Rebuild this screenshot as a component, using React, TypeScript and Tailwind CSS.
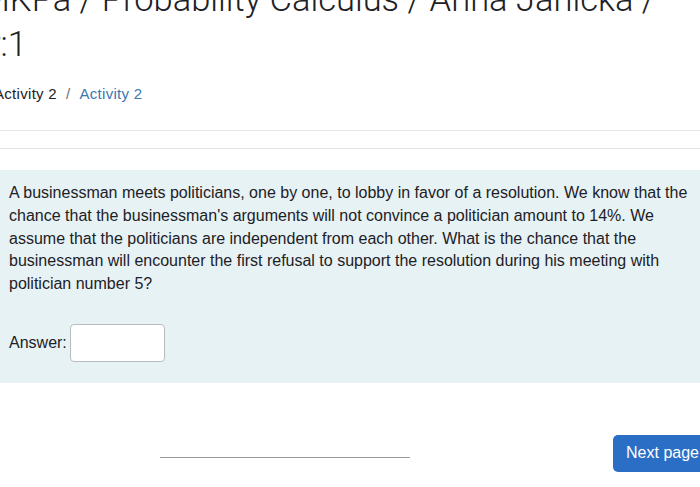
export default function App() {
  return (
    <div className="w-[700px] h-[487px] overflow-hidden bg-white text-[#1d2125] font-['Liberation_Sans',Arial,sans-serif]">
      {/* page title, cut at top */}
      <h1 className="-mt-[23px] -ml-[20px] whitespace-nowrap text-[34.5px] leading-[45px] font-light text-[#1d2125] font-['Roboto',sans-serif]">
        <div>MKPa / Probability Calculus / Anna Janicka /</div>
        <div className="ml-[9px]">r:1</div>
      </h1>

      {/* breadcrumb */}
      <nav className="mt-[17px] -ml-[6px] flex items-center gap-[9px] text-[15px] leading-[20px] tracking-[0.3px] whitespace-nowrap">
        <span className="text-[#1d2125]">Activity 2</span>
        <span className="text-[#6a737b]">/</span>
        <span className="text-[#3a78b0]">Activity 2</span>
      </nav>

      <div className="mt-[26px] border-t border-[#e6e6e6]" />
      <div className="mt-[17px] border-t border-[#e2e2e2]" />

      {/* question */}
      <div className="mt-[21px] bg-[#e7f2f5] pl-[9px] pr-2 pt-[12px] pb-[21px]">
        <p className="text-[16px] leading-[22.8px] text-[#1d2125]">
          A businessman meets politicians, one by one, to lobby in favor of a resolution. We know that the chance that the businessman's arguments will not convince a politician amount to 14%. We assume that the politicians are independent from each other. What is the chance that the businessman will encounter the first refusal to support the resolution during his meeting with politician number 5?
        </p>
        <div className="mt-[28px] flex items-center gap-[3px]">
          <span className="text-[16px]">Answer:</span>
          <input
            type="text"
            className="w-[95px] h-[38px] bg-white border border-[#b8bcc0] rounded-[4px]"
          />
        </div>
      </div>

      {/* footer */}
      <div className="mt-[52px] flex items-start">
        <div className="ml-[160px] mt-[22px] w-[250px] border-t border-[#9a9a9a]" />
        <button className="ml-auto -mr-[12px] h-[37px] rounded-[5px] bg-[#2a6ec6] px-[13px] text-[16px] text-white">
          Next page
        </button>
      </div>
    </div>
  );
}
